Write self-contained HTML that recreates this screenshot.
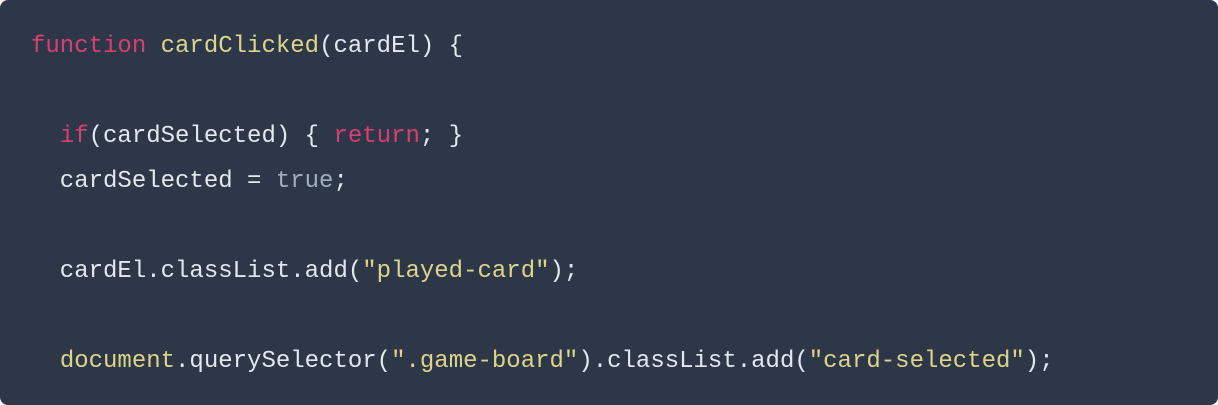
<!DOCTYPE html>
<html><head><style>
html,body{margin:0;padding:0;background:#fff;}
.b{position:absolute;left:0;top:0;width:1218px;height:405px;background:#2d3748;border-radius:8px;overflow:hidden;}
pre{margin:0;position:absolute;left:31px;top:24px;font-family:"Liberation Mono",monospace;font-size:24px;line-height:45px;color:#e2e8f0;}
.k{color:#d53f73;}.f{color:#dcd58b;}.s{color:#dcd58b;}.t{color:#a0aec0;}
</style></head><body><div class="b"><pre><span class="k">function</span> <span class="f">cardClicked</span>(cardEl) {

  <span class="k">if</span>(cardSelected) { <span class="k">return</span>; }
  cardSelected = <span class="t">true</span>;

  cardEl.classList.add(<span class="s">"played-card"</span>);

  <span class="f">document</span>.querySelector(<span class="s">".game-board"</span>).classList.add(<span class="s">"card-selected"</span>);
</pre></div></body></html>
